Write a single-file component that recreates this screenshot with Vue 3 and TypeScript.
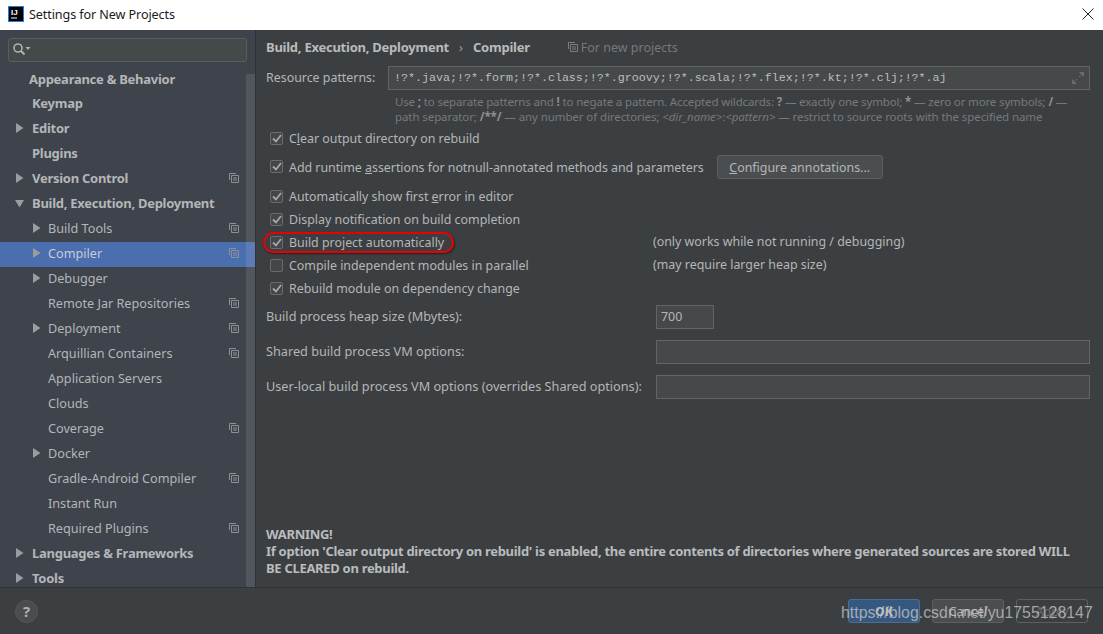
<script setup lang="ts">
interface Node { label: string; level: number; arrow?: 'right' | 'down'; bold?: boolean; copy?: boolean; selected?: boolean; shift?: boolean }
const nodes: Node[] = [
  { label: 'Appearance & Behavior', level: 0, bold: true, shift: true },
  { label: 'Keymap', level: 0, bold: true },
  { label: 'Editor', level: 0, arrow: 'right', bold: true },
  { label: 'Plugins', level: 0, bold: true },
  { label: 'Version Control', level: 0, arrow: 'right', bold: true, copy: true },
  { label: 'Build, Execution, Deployment', level: 0, arrow: 'down', bold: true },
  { label: 'Build Tools', level: 1, arrow: 'right', copy: true },
  { label: 'Compiler', level: 1, arrow: 'right', copy: true, selected: true },
  { label: 'Debugger', level: 1, arrow: 'right' },
  { label: 'Remote Jar Repositories', level: 1, copy: true },
  { label: 'Deployment', level: 1, arrow: 'right', copy: true },
  { label: 'Arquillian Containers', level: 1, copy: true },
  { label: 'Application Servers', level: 1 },
  { label: 'Clouds', level: 1 },
  { label: 'Coverage', level: 1, copy: true },
  { label: 'Docker', level: 1, arrow: 'right' },
  { label: 'Gradle-Android Compiler', level: 1, copy: true },
  { label: 'Instant Run', level: 1 },
  { label: 'Required Plugins', level: 1, copy: true },
  { label: 'Languages & Frameworks', level: 0, arrow: 'right', bold: true },
  { label: 'Tools', level: 0, arrow: 'right', bold: true },
]
const checks = [
  { before: 'Automatically show first ', u: 'e', after: 'rror in editor', on: true, note: '' },
  { before: 'Display notification on build completion', u: '', after: '', on: true, note: '' },
  { before: 'Build project automatically', u: '', after: '', on: true, note: '(only works while not running / debugging)' },
  { before: 'Compile independent modules in parallel', u: '', after: '', on: false, note: '(may require larger heap size)' },
  { before: 'Rebuild module on dependency change', u: '', after: '', on: true, note: '' },
]
</script>

<template>
  <div class="window">
    <header class="titlebar">
      <svg class="logo" width="16" height="16" viewBox="0 0 16 16">
        <rect x="0" y="0" width="16" height="16" fill="#1f7fe0" />
        <rect x="1" y="1" width="14" height="14" fill="#000" />
        <text x="3" y="8.5" class="logo-text">IJ</text>
        <rect x="3" y="11.5" width="6" height="1" fill="#fff" />
      </svg>
      <span class="title">Settings for New Projects</span>
      <svg class="close" width="12" height="12" viewBox="0 0 12 12">
        <path d="M.5.5l11 11M11.500.5l-11 11" stroke="#222" stroke-width="1" fill="none" />
      </svg>
    </header>

    <div class="body">
      <aside class="sidebar">
        <div class="search">
          <svg width="19" height="14" viewBox="0 0 19 14">
            <circle cx="5" cy="5" r="4" fill="none" stroke="#afb1b3" stroke-width="1.600" />
            <path d="M8 8l3.500 3.500" stroke="#afb1b3" stroke-width="2" />
            <path d="M12.500 4h5l-2.500 3z" fill="#afb1b3" />
          </svg>
        </div>
        <div class="tree">
          <div
            v-for="n in nodes"
            :key="n.label"
            class="row"
            :class="{ selected: n.selected, bold: n.bold, l1: n.level === 1, shifted: n.shift }"
          >
            <span class="arrow-slot">
              <svg v-if="n.arrow === 'right'" width="9" height="10" viewBox="0 0 9 10"><path d="M1 0l7.500 5L1 10z" fill="#9a9da0" /></svg>
              <svg v-else-if="n.arrow === 'down'" width="10" height="9" viewBox="0 0 10 9"><path d="M0 1h9L4.500 8.500z" fill="#9a9da0" /></svg>
            </span>
            <span class="row-label">{{ n.label }}</span>
            <svg v-if="n.copy" class="copy" width="10" height="10" viewBox="0 0 10 10">
              <path d="M.5 7V.5H7M2.500 2.500h7v7h-7zM4 5h4M4 7h4" fill="none" stroke="#8d9094" stroke-width="1" />
            </svg>
          </div>
        </div>
        <div class="scrollbar"></div>
      </aside>

      <main class="content">
        <div class="crumbs">
          <span class="crumb">Build, Execution, Deployment</span>
          <span class="sep">›</span>
          <span class="crumb">Compiler</span>
          <svg class="crumb-copy" width="10" height="10" viewBox="0 0 10 10">
            <path d="M.5 7V.5H7M2.500 2.500h7v7h-7zM4 5h4M4 7h4" fill="none" stroke="#7b7e81" stroke-width="1" />
          </svg>
          <span class="for-new">For new projects</span>
        </div>

        <div class="resource">
          <label class="res-label">Resource patterns:</label>
          <div class="res-input">
            <span class="mono">!?*.java;!?*.form;!?*.class;!?*.groovy;!?*.scala;!?*.flex;!?*.kt;!?*.clj;!?*.aj</span>
            <svg width="14" height="14" viewBox="0 0 14 14">
              <path d="M8 1h5v5zM1 8v5h5z" fill="#6a6d70" />
              <path d="M10 4L8 6M4 10l2-2" stroke="#6a6d70" stroke-width="1" />
            </svg>
          </div>
        </div>
        <p class="hint">
          Use <b>;</b> to separate patterns and <b>!</b> to negate a pattern. Accepted wildcards: <b>?</b> — exactly one symbol; <b>*</b> — zero or more symbols; <b>/</b> —<br />
          <span class="hint-second">path separator; <b>/**/</b> — any number of directories; <i>&lt;dir_name&gt;</i>:<i>&lt;pattern&gt;</i> — restrict to source roots with the specified name</span>
        </p>

        <div class="check-row first">
          <span class="box"><svg width="10" height="9" viewBox="0 0 10 9"><path d="M1 4.500l3 3L9 1" fill="none" stroke="#a7a9ab" stroke-width="1.800" /></svg></span>
          <span>C<u>l</u>ear output directory on rebuild</span>
        </div>
        <div class="check-row add">
          <span class="box"><svg width="10" height="9" viewBox="0 0 10 9"><path d="M1 4.500l3 3L9 1" fill="none" stroke="#a7a9ab" stroke-width="1.800" /></svg></span>
          <span class="add-label">Add runtime <u>a</u>ssertions for notnull-annotated methods and parameters</span>
          <button class="btn configure"><u>C</u>onfigure annotations...</button>
        </div>

        <div class="check-group">
          <div v-for="c in checks" :key="c.before" class="check-row">
            <div class="check-main">
              <span class="box"><svg v-if="c.on" width="10" height="9" viewBox="0 0 10 9"><path d="M1 4.500l3 3L9 1" fill="none" stroke="#a7a9ab" stroke-width="1.800" /></svg></span>
              <span>{{ c.before }}<u v-if="c.u">{{ c.u }}</u>{{ c.after }}</span>
            </div>
            <span v-if="c.note" class="note">{{ c.note }}</span>
          </div>
        </div>

        <div class="field first-field">
          <label>Build process heap size (Mbytes):</label>
          <div class="input small">700</div>
        </div>
        <div class="field">
          <label>Shared build process VM options:</label>
          <div class="input"></div>
        </div>
        <div class="field">
          <label>User-local build process VM options (overrides Shared options):</label>
          <div class="input"></div>
        </div>

        <div class="warning">
          WARNING!<br />
          If option 'Clear output directory on rebuild' is enabled, the entire contents of directories where generated sources are stored WILL<br />
          BE CLEARED on rebuild.
        </div>
      </main>
    </div>

    <footer class="footer">
      <div class="help">?</div>
      <div class="actions">
        <button class="btn ok">OK</button>
        <button class="btn">Cancel</button>
        <button class="btn apply">Apply</button>
      </div>
    </footer>

    <div class="highlight"></div>
    <div class="watermark">https://blog.csdn.net/yu1755128147</div>
  </div>
</template>

<style scoped>
.window {
  position: relative;
  width: 1103px;
  height: 634px;
  overflow: hidden;
  display: flex;
  flex-direction: column;
  background: #3c3f41;
  color: #b4b6b8;
  font-family: "Noto Sans", "Open Sans", sans-serif;
  font-size: 12.4px;
}
.titlebar {
  height: 30px;
  flex: none;
  box-sizing: border-box;
  background: #fff;
  display: flex;
  align-items: center;
  padding: 0 9px 2px 8px;
  color: #1a1a1a;
}
.logo { margin-right: 5px; }
.logo-text { font: bold 8px "Liberation Sans", sans-serif; fill: #fff; }
.title { flex: 1; font-size: 12.6px; letter-spacing: -0.1px; }
.body { flex: 1; display: flex; min-height: 0; }
.sidebar {
  position: relative;
  width: 255px;
  flex: none;
  background: #3e434c;
  border-right: 1px solid #323232;
  overflow: hidden;
}
.search {
  margin: 8px 8px 0;
  width: 239px;
  height: 24px;
  box-sizing: border-box;
  background: #45494a;
  border: 1px solid #5a5d5f;
  border-radius: 3px;
  display: flex;
  align-items: center;
  padding-left: 4px;
}
.tree { margin-top: 5px; }
.row {
  height: 25px;
  box-sizing: border-box;
  display: flex;
  align-items: center;
  padding: 0 0 3px 15px;
  position: relative;
  white-space: nowrap;
  color: #b4b6b8;
  font-size: 12.65px;
}
.row.l1 { padding-left: 32px; }
.row.bold { font-size: 13px; font-weight: 700; letter-spacing: -0.27px; }
.row.selected { background: #4b6eaf; color: #c4cbd8; }
.row.shifted { padding-bottom: 1px; }
.arrow-slot { width: 17px; flex: none; display: flex; align-items: center; }
.row.l1 .arrow-slot { width: 16px; }
.row.shifted .arrow-slot { width: 14px; }
.copy { position: absolute; left: 229px; top: 6px; }
.scrollbar {
  position: absolute;
  right: 0;
  top: 44px;
  bottom: 0;
  width: 9px;
  background: rgba(255, 255, 255, 0.1);
}
.content {
  flex: 1;
  min-width: 0;
  display: flex;
  flex-direction: column;
  padding: 0 13px 10px 10px;
}
.crumbs {
  height: 36px;
  box-sizing: border-box;
  padding-bottom: 2px;
  display: flex;
  align-items: center;
  flex: none;
}
.crumb { font-size: 13px; font-weight: 700; color: #b9bbbd; letter-spacing: -0.25px; }
.sep { margin: 0 10px; color: #9a9da0; font-size: 13px; }
.crumb-copy { margin-left: 38px; }
.for-new { margin-left: 3px; color: #76797c; font-size: 12.5px; }
.resource { display: flex; align-items: center; height: 24px; flex: none; }
.res-label { width: 122px; flex: none; padding-bottom: 1px; }
.res-input {
  flex: 1;
  height: 24px;
  box-sizing: border-box;
  background: #45494a;
  border: 1px solid #646464;
  display: flex;
  align-items: center;
  justify-content: space-between;
  padding: 0 4px 0 5px;
}
.mono { font-family: "Liberation Mono", monospace; font-size: 11.67px; color: #bbbdbf; }
.hint {
  margin: 4px 0 0 129px;
  font-size: 11.5px;
  line-height: 15px;
  color: #76797c;
  white-space: nowrap;
  letter-spacing: -0.15px;
}
.hint-second { letter-spacing: -0.09px; }
.hint b { color: #8d9093; }
.check-row {
  height: 22px;
  display: flex;
  align-items: center;
  flex: none;
  white-space: nowrap;
}
.check-row.first { margin-top: 3px; padding-left: 4px; }
.check-row.add { height: 25px; margin-top: 5px; padding-left: 4px; }
.add-label { padding-top: 1px; letter-spacing: -0.02px; }
.check-group { margin-top: 6px; display: flex; flex-direction: column; gap: 1px; }
.check-group .check-row { padding-left: 4px; }
.check-main { width: 383px; flex: none; display: flex; align-items: center; }
.box {
  width: 13px;
  height: 13px;
  box-sizing: border-box;
  margin-right: 6px;
  border: 1px solid #6b6b6b;
  border-radius: 2px;
  background: #43474a;
  display: flex;
  align-items: center;
  justify-content: center;
  flex: none;
}
.note { color: #b4b6b8; padding-bottom: 2px; }
.btn {
  width: 72px;
  height: 24px;
  box-sizing: border-box;
  border: 1px solid #5e6060;
  border-radius: 3px;
  background: #4b4e50;
  color: #b4b6b8;
  font: inherit;
  padding: 0;
}
.configure { width: 166px; margin-left: 13px; padding-top: 1px; }
.field { display: flex; align-items: center; height: 24px; margin-top: 11px; flex: none; }
.field.first-field { margin-top: 6px; }
.field label { width: 390px; flex: none; white-space: nowrap; font-size: 12.7px; padding-bottom: 2px; }
.input {
  flex: 1;
  height: 24px;
  box-sizing: border-box;
  background: #45494a;
  border: 1px solid #646464;
  padding: 2px 4px;
  color: #b4b6b8;
}
.input.small { flex: none; width: 58px; }
.warning {
  margin-top: auto;
  font-size: 13px;
  font-weight: 700;
  line-height: 17px;
  white-space: nowrap;
  color: #b9bbbd;
  letter-spacing: -0.3px;
}
.footer {
  height: 47px;
  flex: none;
  border-top: 1px solid #323232;
  box-sizing: border-box;
  display: flex;
  align-items: center;
  justify-content: space-between;
  padding: 0 15px;
}
.help {
  width: 23px;
  height: 23px;
  border-radius: 50%;
  box-sizing: border-box;
  border: 1px solid #555859;
  background: #4a4d4f;
  color: #b0b2b4;
  display: flex;
  align-items: center;
  justify-content: center;
  font-size: 15px;
  font-weight: 700;
}
.actions { display: flex; gap: 12px; }
.ok { background: #365880; border-color: #4c708c; color: #bbbbbb; font-weight: 700; }
.apply { background: transparent; color: #6e7072; }
.highlight {
  position: absolute;
  left: 263px;
  top: 232px;
  width: 191px;
  height: 21px;
  box-sizing: border-box;
  border: 2px solid #ea0000;
  border-radius: 11px;
  box-shadow: 1px 1px 2px rgba(0, 0, 0, 0.5);
}
.watermark {
  position: absolute;
  left: 841px;
  top: 603px;
  font-family: "Liberation Sans", sans-serif;
  font-size: 15.9px;
  line-height: 20px;
  color: rgba(200, 200, 200, 0.75);
  white-space: nowrap;
}
</style>
